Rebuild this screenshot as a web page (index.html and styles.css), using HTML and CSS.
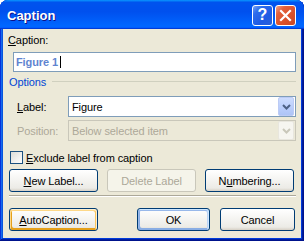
FILE: index.html
```html
<!DOCTYPE html>
<html>
<head>
<meta charset="utf-8">
<link rel="stylesheet" href="styles.css">
</head>
<body>
<div class="window">
  <div class="titlebar">
    <span class="title">Caption</span>
    <div class="controls">
      <span class="tbtn help">?</span>
      <span class="tbtn close"><svg width="19" height="19" viewBox="0 0 19 19"><path d="M5 5 L14 14 M14 5 L5 14" stroke="#fff" stroke-width="2.2" stroke-linecap="square"/></svg></span>
    </div>
  </div>
  <div class="client">
    <div class="cap-label"><u>C</u>aption:</div>
    <div class="textbox"><span class="tb-text">Figure 1</span><span class="caret"></span></div>
    <div class="group-title"><span>Options</span><span class="rule"></span></div>
    <div class="field">
      <span class="field-label"><u>L</u>abel:</span>
      <div class="combo"><span class="combo-text">Figure</span><span class="drop"><svg width="9" height="6" viewBox="0 0 9 6"><path d="M1 1 L4.5 4.5 L8 1" fill="none" stroke="#4d6185" stroke-width="2"/></svg></span></div>
    </div>
    <div class="field field-disabled">
      <span class="field-label">Position:</span>
      <div class="combo"><span class="combo-text">Below selected item</span><span class="drop"><svg width="9" height="6" viewBox="0 0 9 6"><path d="M1 1 L4.5 4.5 L8 1" fill="none" stroke="#c9c7ba" stroke-width="2"/></svg></span></div>
    </div>
    <div class="check"><span class="box"></span><span class="check-text"><u>E</u>xclude label from caption</span></div>
    <div class="btnrow">
      <button type="button" class="btn"><span><u>N</u>ew Label...</span></button>
      <button type="button" class="btn btn-disabled"><span>Delete Label</span></button>
      <button type="button" class="btn"><span>N<u>u</u>mbering...</span></button>
    </div>
    <div class="sep"></div>
    <div class="btnrow btnrow-bottom">
      <button type="button" class="btn btn-hot"><span><u>A</u>utoCaption...</span></button>
      <button type="button" class="btn btn-default btn-ok"><span>OK</span></button>
      <button type="button" class="btn btn-cancel"><span>Cancel</span></button>
    </div>
  </div>
</div>
</body>
</html>
```

FILE: styles.css
```css
html, body {
  margin: 0;
  padding: 0;
  background: #ffffff;
}
body {
  font-family: "Liberation Sans", Arial, sans-serif;
  font-size: 11px;
  letter-spacing: -0.1px;
  color: #000;
}
.window {
  width: 304px;
  height: 241px;
  box-sizing: border-box;
  background: #0831d9;
  border-radius: 8px 8px 0 0;
  padding: 0 3px 3px 3px;
  display: flex;
  flex-direction: column;
  box-shadow: inset -1px -1px #00138c, inset 1px 1px #0831d9, inset -2px -2px #001ea0, inset 2px 2px #166aee, inset -3px -3px #003bda, inset 3px 3px #0855dd;
}
.titlebar {
  height: 29px;
  flex: none;
  margin: 0 -3px;
  border-radius: 8px 8px 0 0;
  background: linear-gradient(180deg, #0997ff, #0053ee 8%, #0050ee 40%, #0066ff 88%, #0066ff 93%, #005bff 95%, #003dd7 96%, #003dd7);
  display: flex;
  align-items: center;
  padding: 0 8px 0 7px;
  box-sizing: border-box;
}
.title {
  flex: 1;
  color: #fff;
  font-weight: bold;
  font-size: 13px;
  letter-spacing: 0;
  text-shadow: 1px 1px #0f1089;
  padding-top: 1px;
}
.controls {
  display: flex;
  gap: 2px;
  padding-top: 1px;
}
.tbtn {
  width: 21px;
  height: 21px;
  box-sizing: border-box;
  border: 1px solid #fff;
  border-radius: 3px;
  display: flex;
  align-items: center;
  justify-content: center;
  color: #fff;
}
.help {
  background: linear-gradient(135deg, #7aa4f7 0%, #2d6cec 25%, #1f5be4 65%, #2a5fd8 100%);
  font-weight: bold;
  font-size: 16px;
  letter-spacing: 0;
}
.close {
  background: linear-gradient(135deg, #f4a48a 0%, #e3603b 25%, #d9502a 65%, #c94826 100%);
}
.client {
  flex: 1;
  background: #ece9d8;
  padding-top: 5px;
  display: flex;
  flex-direction: column;
}
.cap-label {
  margin-left: 5px;
  height: 13px;
  line-height: 13px;
}
.textbox {
  margin: 5px 0 0 10px;
  width: 283px;
  height: 20px;
  box-sizing: border-box;
  border: 1px solid #7f9db9;
  background: #fff;
  display: flex;
  align-items: center;
  padding-left: 2px;
}
.tb-text {
  font-weight: bold;
  color: #5f84d0;
}
.caret {
  width: 1px;
  height: 12px;
  background: #000;
  margin-left: 2px;
}
.group-title {
  margin-top: 3px;
  height: 13px;
  display: flex;
  align-items: center;
  padding-left: 6px;
  margin-right: 5px;
  color: #0046d5;
}
.rule {
  flex: 1;
  height: 1px;
  background: #d0d0bf;
  margin-left: 6px;
}
.field {
  display: flex;
  align-items: center;
  height: 21px;
  margin-top: 8px;
}
.field-disabled {
  margin-top: 3px;
  color: #aca899;
}
.field-label {
  width: 65px;
  box-sizing: border-box;
  padding-left: 14px;
}
.combo {
  width: 228px;
  height: 21px;
  box-sizing: border-box;
  border: 1px solid #7f9db9;
  background: #fff;
  display: flex;
  align-items: stretch;
}
.field-disabled .combo {
  border-color: #c9c7ba;
  background: #ece9d8;
}
.combo-text {
  flex: 1;
  padding-left: 3px;
  display: flex;
  align-items: center;
}
.drop {
  width: 16px;
  margin-right: 1px;
  box-sizing: border-box;
  border: 1px solid #bccbf5;
  border-radius: 2px;
  background: linear-gradient(180deg, #cddcfe 0%, #b9cdfb 60%, #aec4f6 100%);
  display: flex;
  align-items: center;
  justify-content: center;
}
.field-disabled .drop {
  border-color: #e8e6de;
  background: #f6f5f0;
}
.check {
  display: flex;
  align-items: center;
  height: 13px;
  margin-top: 10px;
  padding-left: 7px;
}
.box {
  width: 13px;
  height: 13px;
  box-sizing: border-box;
  border: 1px solid #1c5180;
  background: linear-gradient(135deg, #dcdcd7, #fff);
}
.check-text {
  margin-left: 3px;
}
.btnrow {
  display: flex;
  gap: 9px;
  padding-left: 6px;
  margin-top: 5px;
}
.btn {
  width: 89px;
  height: 23px;
  box-sizing: border-box;
  border: 1px solid #003c74;
  border-radius: 3px;
  background: linear-gradient(180deg, #fff, #ecebe6 86%, #d6d0c5);
  font-family: "Liberation Sans", Arial, sans-serif;
  font-size: 11px;
  letter-spacing: -0.1px;
  color: #000;
  padding: 0;
  margin: 0;
  display: flex;
  align-items: center;
  justify-content: center;
}
.btn-disabled {
  border-color: #c9c7ba;
  background: #f5f4ea;
  color: #aca899;
}
.btn-hot {
  box-shadow: inset -1px 1px #fff0cf, inset 1px 2px #fdd889, inset -2px 2px #fbc761, inset 2px -2px #e5a01a;
}
.btn-default {
  box-shadow: inset -1px 1px #cee7ff, inset 1px 2px #98b8ea, inset -2px 2px #bcd4f6, inset 1px -1px #89ade4, inset 2px -2px #89ade4;
}
.sep {
  margin: 3px 5px 0 6px;
  height: 1px;
  background: #aca899;
  border-bottom: 1px solid #fff;
}
.btnrow-bottom {
  margin-top: 11px;
  gap: 0;
}
.btn-ok {
  width: 73px;
  margin-left: 39px;
}
.btn-cancel {
  width: 75px;
  margin-left: 10px;
}
```
